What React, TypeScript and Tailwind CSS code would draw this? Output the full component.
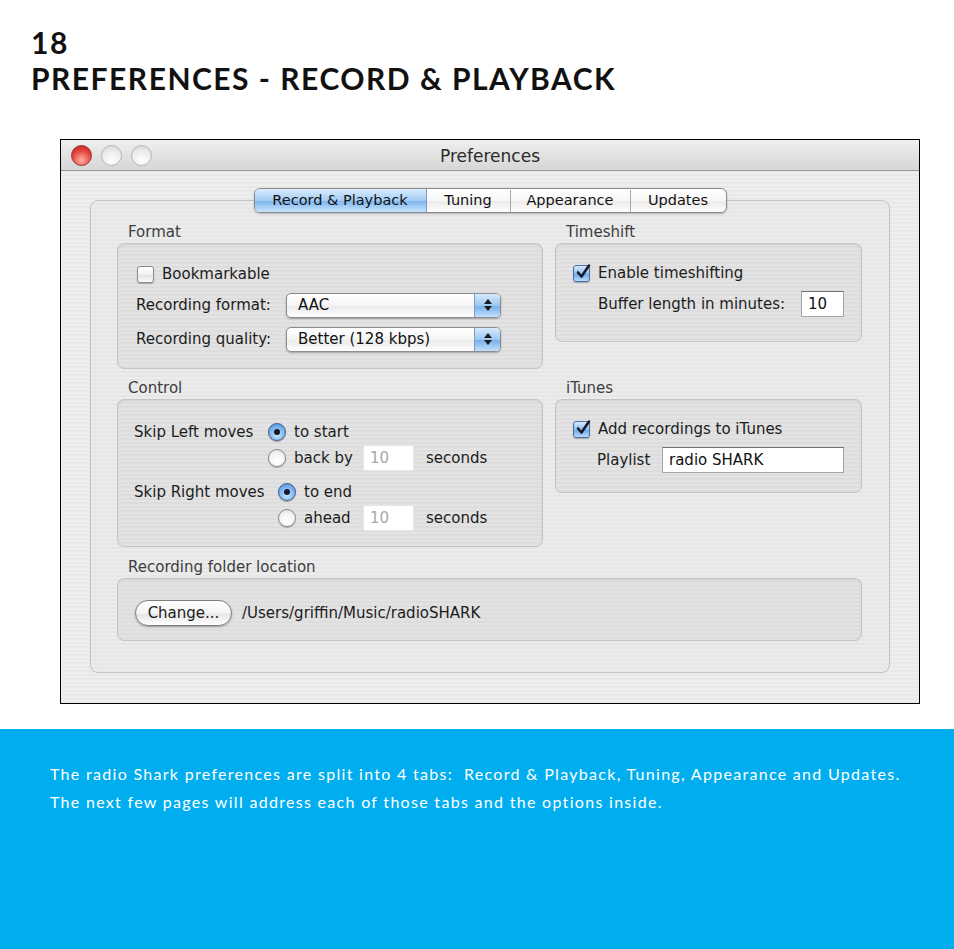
import React from "react";

const ui = { fontFamily: '"DejaVu Sans", "Liberation Sans", sans-serif' };

function Checkbox({ checked }: { checked?: boolean }) {
  return checked ? (
    <span className="relative inline-flex h-[17px] w-[17px] shrink-0 items-center justify-center rounded-[3px] border border-[#4a6fa5] bg-[linear-gradient(180deg,#d8ebfc_0%,#8dbff0_50%,#6aa8e8_55%,#b9dcfb_100%)] shadow-[0_1px_1px_rgba(0,0,0,0.25)]">
      <svg width="17" height="17" viewBox="0 0 17 17" className="absolute -top-[3px] left-[1px]">
        <path d="M3 9.5 L6.5 13.5 L14 2.5" fill="none" stroke="#1a1a2e" strokeWidth="2.6" strokeLinecap="round" strokeLinejoin="round" />
      </svg>
    </span>
  ) : (
    <span className="inline-block h-[17px] w-[17px] shrink-0 rounded-[3px] border border-[#8a8a8a] bg-[linear-gradient(180deg,#ffffff_0%,#f2f2f2_50%,#e4e4e4_55%,#fbfbfb_100%)] shadow-[0_1px_1px_rgba(0,0,0,0.25)]" />
  );
}

function Radio({ checked }: { checked?: boolean }) {
  return checked ? (
    <span className="inline-flex h-[18px] w-[18px] shrink-0 items-center justify-center rounded-full border border-[#3d5f94] bg-[radial-gradient(circle_at_50%_70%,#c8e4fd_0%,#7db5ee_55%,#4b86d0_100%)] shadow-[0_1px_1px_rgba(0,0,0,0.3)]">
      <span className="h-[6px] w-[6px] rounded-full bg-[#15192a]" />
    </span>
  ) : (
    <span className="inline-block h-[18px] w-[18px] shrink-0 rounded-full border border-[#8a8a8a] bg-[radial-gradient(circle_at_50%_70%,#ffffff_0%,#f4f4f4_55%,#d9d9d9_100%)] shadow-[0_1px_1px_rgba(0,0,0,0.25)]" />
  );
}

function Popup({ value }: { value: string }) {
  return (
    <div className="flex h-[25px] w-[215px] overflow-hidden rounded-[5px] border border-[#8d8d8d] bg-[linear-gradient(180deg,#ffffff_0%,#f5f5f5_50%,#ebebeb_55%,#ffffff_100%)] shadow-[0_1px_2px_rgba(0,0,0,0.3)]">
      <div className="flex flex-1 items-center pl-[11px] text-[15px] text-[#111]">{value}</div>
      <div className="flex w-[26px] flex-col items-center justify-center gap-[2px] border-l border-[#7a9cc8] bg-[linear-gradient(180deg,#d7eafc_0%,#9cc8f2_50%,#78b0ea_55%,#c2e1fc_100%)]">
        <svg width="8" height="5" viewBox="0 0 8 5"><path d="M4 0 L8 5 L0 5 Z" fill="#1a1a1a" /></svg>
        <svg width="8" height="5" viewBox="0 0 8 5"><path d="M0 0 L8 0 L4 5 Z" fill="#1a1a1a" /></svg>
      </div>
    </div>
  );
}

function TextField({ value, w, dim }: { value: string; w: string; dim?: boolean }) {
  return (
    <div
      className={`flex h-[26px] items-center bg-white pl-[6px] text-[15px] ${w} ${
        dim ? "text-[#a8a8a8] border border-[#e6e6e6]" : "text-[#111] border border-[#a5a5a5] border-t-[#6f6f6f]"
      }`}
    >
      {value}
    </div>
  );
}

function Group({ label, h, children, className = "" }: { label: string; h: string; children: React.ReactNode; className?: string }) {
  return (
    <div className={className}>
      <div className="h-[18px] pl-[11px] text-[15px] leading-[18px] text-[#3d3d3d]">{label}</div>
      <div
        className={`mt-[2px] ${h} rounded-[7px] border border-[#c4c4c4] bg-[repeating-linear-gradient(180deg,#e3e3e3_0px,#e3e3e3_2px,#dddddd_2px,#dddddd_4px)] shadow-[inset_0_1px_2px_rgba(0,0,0,0.08)]`}
      >
        {children}
      </div>
    </div>
  );
}

export default function App() {
  return (
    <div className="relative h-[949px] w-[954px] overflow-hidden bg-white">
      {/* Header */}
      <div className="pl-[31px] pt-[24px] text-[30px] font-bold leading-[36px] tracking-[1.5px] text-[#111]" style={{ fontFamily: "Lato, 'Open Sans', sans-serif" }}>
        <div>18</div>
        <div>PREFERENCES - RECORD &amp; PLAYBACK</div>
      </div>

      {/* Window */}
      <div className="ml-[60px] mt-[43px] h-[565px] w-[860px] border border-black bg-[repeating-linear-gradient(180deg,#eeeeee_0px,#eeeeee_2px,#e8e8e8_2px,#e8e8e8_4px)]" style={ui}>
        {/* Title bar */}
        <div className="grid h-[31px] grid-cols-[1fr_auto_1fr] items-center border-b border-[#999] bg-[linear-gradient(180deg,#f0f0f0_0%,#e2e2e2_50%,#d6d6d6_100%)]">
          <div className="flex items-center gap-[9px] pl-[10px]">
            <span className="h-[21px] w-[21px] rounded-full border border-[#9b3030] bg-[radial-gradient(circle_at_50%_75%,#ffb0a8_0%,#e5473f_55%,#b3201c_100%)]" />
            <span className="h-[21px] w-[21px] rounded-full border border-[#b5b5b5] bg-[radial-gradient(circle_at_50%_75%,#ffffff_0%,#ececec_55%,#cfcfcf_100%)]" />
            <span className="h-[21px] w-[21px] rounded-full border border-[#b5b5b5] bg-[radial-gradient(circle_at_50%_75%,#ffffff_0%,#ececec_55%,#cfcfcf_100%)]" />
          </div>
          <div className="pt-[4px] text-[17px] text-[#2a2a2a]">Preferences</div>
          <div />
        </div>

        {/* Content */}
        <div className="pt-[17px]">
          {/* Tabs */}
          <div className="relative z-10 flex justify-center">
            <div className="flex h-[25px] overflow-hidden rounded-[6px] border border-[#8a8a8a] bg-[linear-gradient(180deg,#ffffff_0%,#f6f6f6_50%,#ebebeb_55%,#ffffff_100%)] pt-[1px] text-[14.5px] text-[#111] shadow-[0_1px_2px_rgba(0,0,0,0.25)]">
              <div className="-mt-[1px] flex w-[172px] items-center justify-center border-r border-[#7a9cc8] bg-[linear-gradient(180deg,#d9ecfd_0%,#a3ccf4_50%,#82b7ee_55%,#c6e4fd_100%)] pt-[1px]">Record &amp; Playback</div>
              <div className="flex w-[84px] items-center justify-center border-r border-[#a8a8a8]">Tuning</div>
              <div className="flex w-[120px] items-center justify-center border-r border-[#a8a8a8]">Appearance</div>
              <div className="flex w-[95px] items-center justify-center">Updates</div>
            </div>
          </div>

          {/* Panel */}
          <div className="mx-[29px] -mt-[13px] h-[473px] rounded-[8px] border border-[#c2c2c2] bg-[repeating-linear-gradient(180deg,#ececec_0px,#ececec_2px,#e6e6e6_2px,#e6e6e6_4px)] pl-[26px] pr-[27px] pt-[22px] text-[15px] text-[#1c1c1c]">
            <div className="grid grid-cols-[426px_307px] items-start gap-x-[12px] gap-y-[10px]">
              {/* Format */}
              <Group label="Format" h="h-[126px]">
                <div className="flex flex-col pl-[18px] pt-[20px]">
                  <div className="flex h-[20px] items-center gap-[8px] pl-[1px]">
                    <Checkbox />
                    <span>Bookmarkable</span>
                  </div>
                  <div className="mt-[9px] flex h-[24px] items-center">
                    <span className="w-[150px]">Recording format:</span>
                    <Popup value="AAC" />
                  </div>
                  <div className="mt-[10px] flex h-[24px] items-center">
                    <span className="w-[150px]">Recording quality:</span>
                    <Popup value="Better (128 kbps)" />
                  </div>
                </div>
              </Group>

              {/* Timeshift */}
              <Group label="Timeshift" h="h-[99px]">
                <div className="flex flex-col pl-[17px] pt-[19px]">
                  <div className="flex h-[20px] items-center gap-[8px]">
                    <Checkbox checked />
                    <span>Enable timeshifting</span>
                  </div>
                  <div className="mt-[8px] flex h-[26px] items-center pl-[25px]">
                    <span className="w-[203px]">Buffer length in minutes:</span>
                    <TextField value="10" w="w-[43px]" />
                  </div>
                </div>
              </Group>

              {/* Control */}
              <Group label="Control" h="h-[148px]">
                <div className="flex flex-col pl-[16px] pt-[19px]">
                  <div className="flex h-[26px] items-center">
                    <span className="w-[134px]">Skip Left moves</span>
                    <Radio checked />
                    <span className="ml-[8px]">to start</span>
                  </div>
                  <div className="flex h-[26px] items-center pl-[134px]">
                    <Radio />
                    <span className="ml-[8px] w-[69px]">back by</span>
                    <TextField value="10" w="w-[51px]" dim />
                    <span className="ml-[12px]">seconds</span>
                  </div>
                  <div className="mt-[8px] flex h-[26px] items-center">
                    <span className="w-[144px]">Skip Right moves</span>
                    <Radio checked />
                    <span className="ml-[8px]">to end</span>
                  </div>
                  <div className="flex h-[26px] items-center pl-[144px]">
                    <Radio />
                    <span className="ml-[8px] w-[59px]">ahead</span>
                    <TextField value="10" w="w-[51px]" dim />
                    <span className="ml-[12px]">seconds</span>
                  </div>
                </div>
              </Group>

              {/* iTunes */}
              <Group label="iTunes" h="h-[94px]">
                <div className="flex flex-col pl-[17px] pt-[19px]">
                  <div className="flex h-[20px] items-center gap-[8px]">
                    <Checkbox checked />
                    <span>Add recordings to iTunes</span>
                  </div>
                  <div className="mt-[8px] flex h-[26px] items-center pl-[24px]">
                    <span className="w-[65px]">Playlist</span>
                    <TextField value="radio SHARK" w="w-[182px]" />
                  </div>
                </div>
              </Group>

              {/* Folder */}
              <Group label="Recording folder location" h="h-[63px]" className="col-span-2 mt-[1px]">
                <div className="flex items-center pl-[17px] pt-[21px]">
                  <div className="flex h-[26px] w-[97px] items-center justify-center rounded-full border border-[#7f7f7f] bg-[linear-gradient(180deg,#ffffff_0%,#f5f5f5_50%,#e6e6e6_55%,#ffffff_100%)] shadow-[0_1px_2px_rgba(0,0,0,0.3)]">
                    Change...
                  </div>
                  <span className="ml-[10px]">/Users/griffin/Music/radioSHARK</span>
                </div>
              </Group>
            </div>
          </div>
        </div>
      </div>

      {/* Blue band */}
      <div className="mt-[25px] h-[220px] bg-[#00aeef] pl-[50px] pt-[31px] text-[16px] leading-[28px] tracking-[1.3px] text-white" style={{ fontFamily: "Lato, 'Open Sans', sans-serif" }}>
        <div>The radio Shark preferences are split into 4 tabs:&nbsp; Record &amp; Playback, Tuning, Appearance and Updates.</div>
        <div>The next few pages will address each of those tabs and the options inside.</div>
      </div>
    </div>
  );
}
